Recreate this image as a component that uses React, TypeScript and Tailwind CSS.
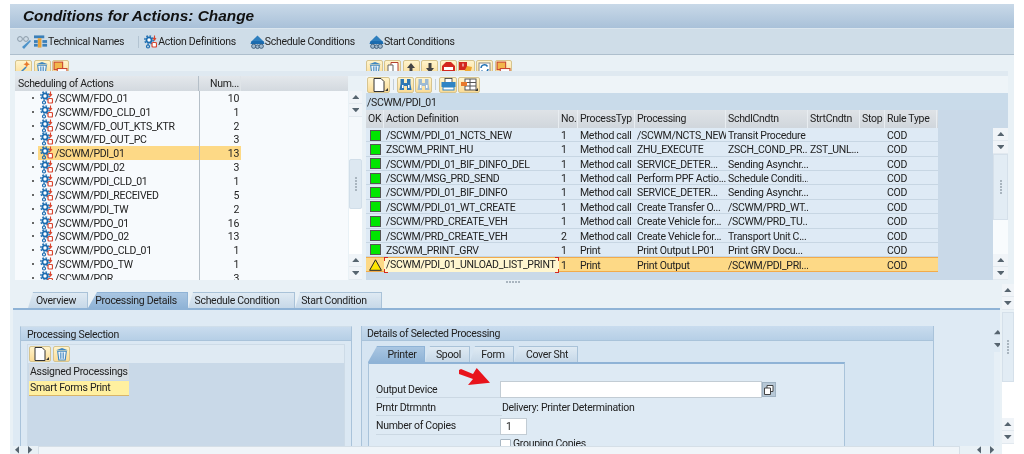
import React from "react";

const Gear = () => (
  <svg width="13" height="14" viewBox="0 0 13 14" className="shrink-0">
    <circle cx="5" cy="5" r="2.6" fill="#fff" stroke="#1b6cb0" strokeWidth="1.8" />
    <circle cx="5" cy="5" r="4.2" fill="none" stroke="#1b6cb0" strokeWidth="1.4" strokeDasharray="1.6 1.7" />
    <circle cx="4" cy="11.5" r="1.5" fill="none" stroke="#1b6cb0" strokeWidth="1.2" />
    <rect x="8" y="7.5" width="4.5" height="4.5" rx="1" fill="#fff" stroke="#d9452f" strokeWidth="1.2" />
    <path d="M10.5 0.5v4M9 3l1.5 2L12 3" fill="none" stroke="#d9452f" strokeWidth="1.1" />
  </svg>
);
const Cloud = () => (
  <svg width="15" height="16" viewBox="0 0 16 16" className="shrink-0">
    <path d="M8 1l6 6H2z" fill="#2f7fbe" />
    <path d="M1.5 7h13l1 3H.5z" fill="#1b6cb0" />
    <circle cx="4" cy="12.5" r="2.3" fill="#9db8cf" stroke="#33536f" strokeWidth="0.9" />
    <circle cx="8" cy="13" r="2" fill="#9db8cf" stroke="#33536f" strokeWidth="0.9" />
    <circle cx="12" cy="12.5" r="2.3" fill="#9db8cf" stroke="#33536f" strokeWidth="0.9" />
  </svg>
);
const Glasses = () => (
  <svg width="16" height="14" viewBox="0 0 16 14" className="shrink-0">
    <circle cx="4" cy="4" r="2.4" fill="none" stroke="#8a9aa8" strokeWidth="1" />
    <circle cx="10" cy="4" r="2.4" fill="none" stroke="#8a9aa8" strokeWidth="1" />
    <path d="M6 12l8-7 1 1-7 8z" fill="#4d93c9" />
  </svg>
);
const TechNames = () => (
  <svg width="14" height="15" viewBox="0 0 15 15" className="shrink-0">
    <rect x="0" y="1" width="11" height="3" fill="#3a7fb8" />
    <rect x="4" y="4" width="4" height="10" fill="#e8a33a" />
    <rect x="0" y="6" width="4" height="3" fill="#3a7fb8" />
    <rect x="9" y="6" width="5" height="3" fill="#3a7fb8" />
    <rect x="9" y="10" width="5" height="3" fill="#3a7fb8" />
    <rect x="0" y="10" width="4" height="3" fill="#3a7fb8" />
  </svg>
);

const Btn = ({ children, w = "w-[17px]", arrow = false }: { children: React.ReactNode; w?: string; arrow?: boolean }) => (
  <div className={`${w} h-[16px] relative flex items-center justify-center shrink-0 rounded-[2px] border border-[#d6c48f] bg-gradient-to-b from-[#fff4cc] to-[#fbdc96]`}>
    {children}
    {arrow && <span className="absolute right-[1px] bottom-[1px] w-0 h-0 border-l-[3px] border-l-transparent border-b-[3px] border-b-[#333]" />}
  </div>
);
const Trash = () => (
  <svg width="14" height="14" viewBox="0 0 13 13">
    <path d="M1 3l5.500-2L12 3z" fill="#3d85c0" />
    <path d="M2.500 4h8l-1 8h-6z" fill="#fff" stroke="#3d85c0" strokeWidth="1" />
    <path d="M5 5v6M6.500 5v6M8 5v6" stroke="#3d85c0" strokeWidth="0.8" />
  </svg>
);
const Doc = () => (
  <svg width="12" height="14" viewBox="0 0 12 14">
    <path d="M1 .5h7l3 3v10H1z" fill="#fff" stroke="#333" strokeWidth="1" />
  </svg>
);
const Wand = () => (
  <svg width="14" height="14" viewBox="0 0 13 13">
    <path d="M1 12l7-7 1 1-7 7z" fill="#3d85c0" />
    <path d="M9 0l1 2 2 1-2 1-1 2-1-2-2-1 2-1z" fill="#e8792b" />
  </svg>
);
const Transport = () => (
  <svg width="15" height="14" viewBox="0 0 14 13">
    <rect x="1" y="1" width="8" height="7" fill="#f2b64a" stroke="#c8452f" strokeWidth="1" />
    <rect x="4" y="7" width="9" height="5" fill="#fff" stroke="#c8452f" strokeWidth="1" />
  </svg>
);
const Copy = () => (
  <svg width="12" height="13" viewBox="0 0 12 13">
    <path d="M4 .5h7v9H4z" fill="#fff" stroke="#b5412e" strokeWidth="1" />
    <path d="M1 3h5v9H1z" fill="#fff" stroke="#666" strokeWidth="1" />
  </svg>
);
const Up = ({ c = "#444" }: { c?: string }) => (
  <svg width="10" height="12" viewBox="0 0 10 12"><path d="M5 1l4 5H6.500v5h-3V6H1z" fill={c} /></svg>
);
const Down = ({ c = "#444" }: { c?: string }) => (
  <svg width="10" height="12" viewBox="0 0 10 12"><path d="M5 11L1 6h2.500V1h3v5H9z" fill={c} /></svg>
);
const Stop = () => (
  <svg width="13" height="13" viewBox="0 0 13 13"><path d="M4 0h5l4 4v5l-4 4H4L0 9V4z" fill="#d3281f" /><rect x="2" y="5" width="9" height="3" fill="#fff" /></svg>
);
const Flag = () => (
  <svg width="14" height="13" viewBox="0 0 14 13"><rect x="0" y="0" width="8" height="8" fill="#d3281f" /><rect x="3.500" y="1.500" width="1" height="3" fill="#fff" /><path d="M8 4l5 1-2 7H5l1-4z" fill="#f0a52e" /></svg>
);
const Refresh = () => (
  <svg width="13" height="13" viewBox="0 0 13 13"><rect x="1" y="1" width="11" height="11" fill="#fff" stroke="#888" /><path d="M3 6a3.500 3.500 0 0 1 6.500-1.500M10 7a3.500 3.500 0 0 1-6.500 1.500" fill="none" stroke="#1d6fb2" strokeWidth="1.500" /></svg>
);
const Binoc = ({ muted = false }: { muted?: boolean }) => {
  const c = muted ? "#9dbad3" : "#2f78b5";
  return (
    <svg width="13" height="13" viewBox="0 0 13 13">
      <path d="M1.500 1h3.500v4h3V1h3.500v5l1 6H8V8H5v4H.5l1-6z" fill={c} />
      <rect x="3" y="7" width="1.500" height="3" fill="#fff" />
      <rect x="9" y="7" width="1.500" height="3" fill="#fff" />
    </svg>
  );
};
const Printer = () => (
  <svg width="15" height="13" viewBox="0 0 15 13">
    <rect x="4" y="0.500" width="7" height="4" fill="#fff" stroke="#333" strokeWidth="0.8" />
    <rect x="0.500" y="4" width="14" height="5" fill="#2f84c4" />
    <rect x="2" y="9" width="11" height="3" fill="#fff" stroke="#2f84c4" />
  </svg>
);
const Grid = () => (
  <svg width="16" height="13" viewBox="0 0 16 13">
    <rect x="4" y="1" width="11" height="11" fill="#fff" stroke="#555" />
    <path d="M4 4.500h11M4 8h11M9 1v11" stroke="#555" />
    <rect x="0" y="4" width="6" height="4" fill="#e8792b" />
  </svg>
);

const Arr = ({ dir }: { dir: "up" | "down" | "left" | "right" }) => {
  const p = dir === "up" ? "M0 5L4.500 0 9 5z" : dir === "down" ? "M0 0L4.500 5 9 0z" : dir === "left" ? "M5 0L0 4.500 5 9z" : "M0 0L5 4.500 0 9z";
  const s = dir === "up" || dir === "down" ? { w: 9, h: 5 } : { w: 5, h: 9 };
  return (
    <svg width={s.w * 0.85} height={s.h * 0.85} viewBox={`0 0 ${s.w} ${s.h}`}>
      <path d={p} fill="#56646f" />
    </svg>
  );
};
const ScrollBtn = ({ dir }: { dir: "up" | "down" }) => (
  <div className="h-[13px] shrink-0 flex items-center justify-center bg-[#f0f4f8] border-b border-[#e2e9ef]">
    <Arr dir={dir} />
  </div>
);

const tree: [string, string][] = [
  ["/SCWM/FDO_01", "10"],
  ["/SCWM/FDO_CLD_01", "1"],
  ["/SCWM/FD_OUT_KTS_KTR", "2"],
  ["/SCWM/FD_OUT_PC", "3"],
  ["/SCWM/PDI_01", "13"],
  ["/SCWM/PDI_02", "3"],
  ["/SCWM/PDI_CLD_01", "1"],
  ["/SCWM/PDI_RECEIVED", "5"],
  ["/SCWM/PDI_TW", "2"],
  ["/SCWM/PDO_01", "16"],
  ["/SCWM/PDO_02", "13"],
  ["/SCWM/PDO_CLD_01", "1"],
  ["/SCWM/PDO_TW", "1"],
  ["/SCWM/POR", "3"],
];

const rows: string[][] = [
  ["/SCWM/PDI_01_NCTS_NEW", "1", "Method call", "/SCWM/NCTS_NEW", "Transit Procedure", "", "", "COD"],
  ["ZSCWM_PRINT_HU", "1", "Method call", "ZHU_EXECUTE", "ZSCH_COND_PR...", "ZST_UNL...", "", "COD"],
  ["/SCWM/PDI_01_BIF_DINFO_DEL", "1", "Method call", "SERVICE_DETER...", "Sending Asynchr...", "", "", "COD"],
  ["/SCWM/MSG_PRD_SEND", "1", "Method call", "Perform PPF Actio...", "Schedule Conditi...", "", "", "COD"],
  ["/SCWM/PDI_01_BIF_DINFO", "1", "Method call", "SERVICE_DETER...", "Sending Asynchr...", "", "", "COD"],
  ["/SCWM/PDI_01_WT_CREATE", "1", "Method call", "Create Transfer O...", "/SCWM/PRD_WT...", "", "", "COD"],
  ["/SCWM/PRD_CREATE_VEH", "1", "Method call", "Create Vehicle for...", "/SCWM/PRD_TU...", "", "", "COD"],
  ["/SCWM/PRD_CREATE_VEH", "2", "Method call", "Create Vehicle for...", "Transport Unit C...", "", "", "COD"],
  ["ZSCWM_PRINT_GRV", "1", "Print", "Print Output LP01", "Print GRV Docu...", "", "", "COD"],
];

const cols = "grid grid-cols-[18px_175px_19px_57px_91px_82px_52px_25px_52px]";
const heads = ["OK", "Action Definition", "No.", "ProcessTyp", "Processing", "SchdlCndtn", "StrtCndtn", "Stop", "Rule Type"];

const Cell = ({ children }: { children?: React.ReactNode }) => (
  <div className="px-[2px] whitespace-nowrap overflow-hidden leading-[15px] h-[14px]">{children}</div>
);

const Tab = ({ label, w, active, pad = "pl-[3px]" }: { label: string; w: string; active?: boolean; pad?: string }) => (
  <div
    className={`${w} ${pad} h-full shrink-0 flex items-center justify-center whitespace-nowrap border-t border-r ${
      active
        ? "[clip-path:polygon(9px_0,100%_0,100%_100%,0_100%)] bg-gradient-to-b from-[#a9c6e2] to-[#8fb3d6] border-[#8fb3d6]"
        : "[clip-path:polygon(5px_0,100%_0,100%_100%,0_100%)] bg-gradient-to-b from-[#dfeaf3] to-[#c6d8e8] border-[#a9c2d8]"
    }`}
  >
    {label}
  </div>
);

const Dots = ({ v = false }: { v?: boolean }) => (
  <div className={`flex ${v ? "flex-col" : ""} gap-[1px]`}>
    {[0, 1, 2, 3, 4].map((i) => (
      <span key={i} className="w-[2px] h-[2px] bg-[#a9b5bf] block" />
    ))}
  </div>
);

export default function App() {
  return (
    <div className="w-[1024px] h-[454px] overflow-hidden bg-white pt-[4px] pl-[10px] font-['Roboto','Liberation_Sans',sans-serif] text-[10.5px] tracking-[-0.3px] text-[#222] blur-[0.35px]">
      <div className="w-[1004px] h-[450px] flex flex-col bg-[#e9f1f6]">
        {/* Title */}
        <div className="h-[25px] shrink-0 flex items-center pl-[13px] pb-[1px] bg-gradient-to-b from-[#c9d9e8] to-[#a9c1d9] border-b border-[#dbe6ee]">
          <span className="font-['Liberation_Sans',sans-serif] tracking-normal font-bold italic text-[15.4px] text-[#111]">Conditions for Actions: Change</span>
        </div>
        {/* Toolbar */}
        <div className="h-[26px] shrink-0 flex items-center pl-[6px] bg-[#cfdde8] border-b border-[#aebfcd]">
          <Glasses />
          <span className="w-[2px]" />
          <TechNames />
          <span>Technical Names</span>
          <span className="w-px h-[12px] bg-[#b3c4d2] ml-[14px] mr-[5px]" />
          <Gear />
          <span className="ml-[1px]">Action Definitions</span>
          <span className="w-[14px]" />
          <Cloud />
          <span>Schedule Conditions</span>
          <span className="w-[14px]" />
          <Cloud />
          <span>Start Conditions</span>
        </div>

        {/* Upper split */}
        <div className="h-[225px] shrink-0 flex pl-[5px] pr-[6px]">
          {/* Left */}
          <div className="w-[351px] shrink-0 flex flex-col">
            <div className="h-[16px] shrink-0 overflow-hidden flex items-start gap-[1.5px] pt-[5px]">
              <Btn><Wand /></Btn>
              <Btn><Trash /></Btn>
              <Btn><Transport /></Btn>
            </div>
            <div className="h-[5px] shrink-0 bg-[#dfe9f1]" />
            <div className="flex-1 min-h-0 flex">
              <div className="w-[333px] shrink-0 flex flex-col overflow-hidden bg-[#f7fafd]">
                <div className="h-[15px] shrink-0 flex leading-[16px] bg-gradient-to-b from-[#e4e8ec] to-[#d3d9df]">
                  <div className="w-[184px] pl-[3px] border-r border-[#b5bfc8]">Scheduling of Actions</div>
                  <div className="w-[42px] text-right pr-[1px] border-r border-[#dfe4e8]">Num...</div>
                </div>
                <div className="flex-1 min-h-0 relative overflow-hidden">
                  <div className="absolute left-[184px] top-0 bottom-0 w-px bg-[#b5bfc8] z-10" />
                  {tree.map(([n, c], i) => (
                    <div key={n} className="h-[13.85px] flex items-center leading-[16px]">
                      <div className="w-[23px] shrink-0 flex justify-end pr-[4px]">
                        <span className="w-[2px] h-[2px] bg-[#666]" />
                      </div>
                      <div className={`w-[203px] h-full flex items-center ${i === 4 ? "bg-[#fdd986]" : ""}`}>
                        <span className="ml-[2px]"><Gear /></span>
                        <span className="ml-[2px] w-[144px] whitespace-nowrap h-[14px]">{n}</span>
                        <span className="w-[40px] text-right h-[14px]">{c}</span>
                      </div>
                    </div>
                  ))}
                </div>
              </div>
              <div className="w-[13px] shrink-0 flex flex-col bg-[#f4f8fb] ml-[1px]">
                <div className="h-[15px] shrink-0 bg-[#e9f1f6]" />
                <ScrollBtn dir="up" />
                <ScrollBtn dir="down" />
                <div className="h-[42px] shrink-0" />
                <div className="h-[50px] shrink-0 rounded-[2px] bg-[#dde8f1] border border-[#d1dee9] flex items-center justify-center"><Dots v /></div>
                <div className="flex-1 bg-white" />
                <ScrollBtn dir="up" />
                <ScrollBtn dir="down" />
              </div>
            </div>
          </div>
          {/* Right */}
          <div className="flex-1 min-w-0 flex flex-col">
            <div className="h-[16px] shrink-0 overflow-hidden flex items-start gap-[1.4px] pt-[5px]">
              <Btn><Trash /></Btn>
              <Btn><Copy /></Btn>
              <Btn><Up /></Btn>
              <Btn><Down /></Btn>
              <Btn><Stop /></Btn>
              <Btn><Flag /></Btn>
              <Btn><Refresh /></Btn>
              <Btn><Transport /></Btn>
            </div>
            <div className="h-[5px] shrink-0 bg-[#dfe9f1]" />
            <div className="h-[17px] shrink-0 flex items-center pl-[1px] bg-[#eef4f8]">
              <Btn w="w-[23px]" arrow><Doc /></Btn>
              <span className="w-px h-[11px] bg-[#c3ced7] mx-[3px]" />
              <Btn><Binoc /></Btn>
              <span className="w-[1px]" />
              <Btn><Binoc muted /></Btn>
              <span className="w-px h-[11px] bg-[#c3ced7] mx-[3px]" />
              <Btn w="w-[18px]"><Printer /></Btn>
              <span className="w-[1px]" />
              <Btn w="w-[22px]" arrow><Grid /></Btn>
            </div>
            <div className="h-[17px] shrink-0 flex items-center pl-[1px] pt-[2px] bg-[#c9dbea]">/SCWM/PDI_01</div>
            <div className="flex-1 min-h-0 flex bg-[#c9d9e8]">
              <div className="w-[572px] shrink-0 overflow-hidden">
                <div className={`${cols} h-[18px] leading-[18px] bg-gradient-to-b from-[#dfe3e7] to-[#d0d6dc]`}>
                  {heads.map((h) => (
                    <div key={h} className="px-[2px] whitespace-nowrap overflow-hidden border-r border-[#e8edf1] leading-[18px]">{h}</div>
                  ))}
                </div>
                {rows.map((r, i) => (
                  <div key={i} className={`${cols} h-[14.37px] items-center bg-[#deeaf5] border-b border-[#c7d6e3]`}>
                    <div className="flex justify-center">
                      <span className="w-[11px] h-[11px] bg-[#00e600] border border-[#555] block" />
                    </div>
                    {r.map((t, j) => <Cell key={j}>{t}</Cell>)}
                  </div>
                ))}
                <div className={`${cols} h-[15px] items-center bg-[#fdd986] border-t border-b border-[#f2ab4b]`}>
                  <div className="flex justify-center">
                    <svg width="13" height="12" viewBox="0 0 13 12"><path d="M6.500 .8L12.400 11.300H.6z" fill="#ffe600" stroke="#222" strokeWidth="1" /></svg>
                  </div>
                  <div className="relative h-full px-[2px] leading-[14px] whitespace-nowrap bg-[#fff6cf]">
                    /SCWM/PDI_01_UNLOAD_LIST_PRINT
                    <span className="absolute left-0 top-[-1px] w-[4px] h-[4px] border-l border-t border-[#d3281f]" />
                    <span className="absolute right-0 top-[-1px] w-[4px] h-[4px] border-r border-t border-[#d3281f]" />
                    <span className="absolute left-0 bottom-[-1px] w-[4px] h-[4px] border-l border-b border-[#d3281f]" />
                    <span className="absolute right-0 bottom-[-1px] w-[4px] h-[4px] border-r border-b border-[#d3281f]" />
                  </div>
                  <Cell>1</Cell>
                  <Cell>Print</Cell>
                  <Cell>Print Output</Cell>
                  <Cell>/SCWM/PDI_PRI...</Cell>
                  <Cell />
                  <Cell />
                  <Cell>COD</Cell>
                </div>
              </div>
              <div className="w-[55px] shrink-0" />
              <div className="w-[15px] shrink-0 flex flex-col bg-[#f8fbfd]">
                <div className="h-[18px] shrink-0 bg-[#c9d9e8]" />
                <ScrollBtn dir="up" />
                <ScrollBtn dir="down" />
                <div className="h-[66px] shrink-0 bg-[#e2ecf4] border border-[#d5e0ea] flex items-center justify-center"><Dots v /></div>
                <div className="flex-1" />
                <ScrollBtn dir="up" />
                <ScrollBtn dir="down" />
              </div>
            </div>
          </div>
        </div>

        {/* Lower */}
        <div className="flex-1 min-h-0 flex">
          <div className="w-[990px] shrink-0 flex flex-col">
            {/* Splitter */}
            <div className="h-[12px] shrink-0 flex justify-center pt-[1px] pl-[15px]"><Dots /></div>
            <div className="flex-1 min-h-0 flex flex-col pl-[3px]">
              <div className="h-[16px] shrink-0 flex pl-[15px] border-b-[2px] border-[#8fb3d6] box-content">
                <Tab label="Overview" w="w-[60px]" pad="pr-[3px]" />
                <Tab label="Processing Details" w="w-[100px]" active pad="pr-[3px]" />
                <Tab label="Schedule Condition" w="w-[107px]" pad="pr-[8px]" />
                <Tab label="Start Condition" w="w-[87px]" pad="pr-[8px]" />
              </div>
              <div className="flex-1 min-h-0 overflow-hidden flex bg-[#deeaf4] pt-[16px] pl-[7px]">
                {/* Processing Selection */}
                <div className="w-[332px] shrink-0 flex flex-col h-[160px] border-t border-[#cfdeea] bg-[#dbe8f3] border-x border-x-[#a9c3da]">
                  <div className="h-[14px] shrink-0 leading-[15px] pl-[6px] bg-gradient-to-b from-[#c9dcee] to-[#b6cfe6] border-b border-[#a9c3da]">Processing Selection</div>
                  <div className="mx-[6px] mt-[3px] flex-1 flex flex-col border border-[#cddbe7] bg-[#c9d9e8]">
                    <div className="h-[18px] shrink-0 flex items-center gap-[2px] pl-[1px] bg-[#dfeaf3]">
                      <Btn w="w-[22px]" arrow><Doc /></Btn>
                      <Btn><Trash /></Btn>
                    </div>
                    <div className="w-[100px] h-[16px] mt-[1px] ml-[1px] leading-[16px] pl-[1px] whitespace-nowrap bg-[#d5dce2]">Assigned Processings</div>
                    <div className="w-[100px] h-[15px] mt-[1px] ml-[1px] leading-[14px] pl-[1px] whitespace-nowrap bg-[#fff0a0] border-b border-[#d8b56a]">Smart Forms Print</div>
                  </div>
                </div>
                <div className="w-[9px] shrink-0" />
                {/* Details */}
                <div className="w-[573px] shrink-0 flex flex-col h-[160px] border-x border-[#a9c3da] bg-[#d6e5f2]">
                  <div className="h-[15px] shrink-0 leading-[15px] pl-[5px] bg-gradient-to-b from-[#c9dcee] to-[#b6cfe6] border-b border-[#a9c3da]">Details of Selected Processing</div>
                  <div className="h-[16px] mt-[5px] shrink-0 flex pl-[6px]">
                    <Tab label="Printer" w="w-[57px]" active pad="pl-[12px]" />
                    <Tab label="Spool" w="w-[45px]" />
                    <Tab label="Form" w="w-[44px]" />
                    <Tab label="Cover Sht" w="w-[64px]" />
                  </div>
                  <div className="w-[477px] ml-[6px] flex-1 border-t-[2px] border-t-[#8fb3d6] border-x border-x-[#a9c3da] bg-[#deeaf4] pl-[7px] pt-[17px]">
                    <div className="flex items-center h-[17px]">
                      <div className="w-[124px] border-b border-[#cbd8e3] h-[17px] leading-[18px]">Output Device</div>
                      <div className="w-[262px] h-[17px] bg-white border border-[#c2ccd4]" />
                      <div className="w-[14px] h-[15px] bg-[#b7c8d6] border border-[#9fb2c2] flex items-center justify-center">
                        <svg width="10" height="10" viewBox="0 0 10 10"><path d="M3 .5h6v6H3z" fill="#fff" stroke="#444" /><path d="M.5 3h6v6.500H.5z" fill="#fff" stroke="#444" /></svg>
                      </div>
                    </div>
                    <div className="flex items-center h-[20px]">
                      <div className="w-[126px] h-[15px] border-b border-[#cbd8e3] leading-[14px]">Prntr Dtrmntn</div>
                      <div>Delivery: Printer Determination</div>
                    </div>
                    <div className="flex items-center h-[17px]">
                      <div className="w-[124px] border-b border-[#cbd8e3] h-[17px] leading-[16px]">Number of Copies</div>
                      <div className="w-[27px] h-[17px] bg-white border border-[#c2ccd4] pl-[5px] leading-[15px]">1</div>
                    </div>
                    <div className="flex items-center h-[14px] mt-[2px] pl-[124px]">
                      <span className="w-[11px] h-[11px] bg-white border border-[#a9b7c3] rounded-[1px] mr-[2px]" />
                      <span>Grouping Copies</span>
                    </div>
                  </div>
                </div>
                <div className="w-[60px] shrink-0" />
                <div className="w-[8px] shrink-0 flex flex-col">
                  <div className="h-[13px] shrink-0 flex items-center justify-center"><Arr dir="up" /></div>
                  <div className="h-[13px] shrink-0 flex items-center justify-center"><Arr dir="down" /></div>
                  <div className="flex-1 bg-[#e6eff6]" />
                </div>
              </div>
            </div>
            {/* H scrollbar */}
            <div className="h-[8px] shrink-0 flex items-center bg-[#e9f1f6]">
              <div className="w-[5px]" />
              <Arr dir="left" />
              <div className="w-[9px]" />
              <Arr dir="right" />
              <div className="w-[5px]" />
              <div className="w-[922px] h-full bg-[#f0f5f9] border-t border-x border-[#d5dfe7]" />
              <div className="w-[17px]" />
              <Arr dir="left" />
              <div className="w-[9px]" />
              <Arr dir="right" />
            </div>
          </div>
          {/* Page v scrollbar */}
          <div className="w-[12px] ml-[2px] shrink-0 flex flex-col">
            <div className="h-[4px] shrink-0" />
            <ScrollBtn dir="up" />
            <ScrollBtn dir="down" />
            <div className="h-[2px] shrink-0" />
            <div className="h-[70px] shrink-0 bg-[#e2ecf4] border border-[#d5e0ea] flex items-center justify-center"><Dots v /></div>
            <div className="flex-1 bg-white" />
            <ScrollBtn dir="up" />
            <ScrollBtn dir="down" />
            <div className="h-[10px] shrink-0 bg-white" />
          </div>
        </div>
      </div>
      {/* Red arrow annotation */}
      <svg width="34" height="20" viewBox="0 0 34 20" className="absolute left-[458px] top-[366px]">
        <path d="M1 4L3 3L15 8L18.700 2L32 16.700L10 19L15 13L1 8z" fill="#e8141c" />
      </svg>
    </div>
  );
}
